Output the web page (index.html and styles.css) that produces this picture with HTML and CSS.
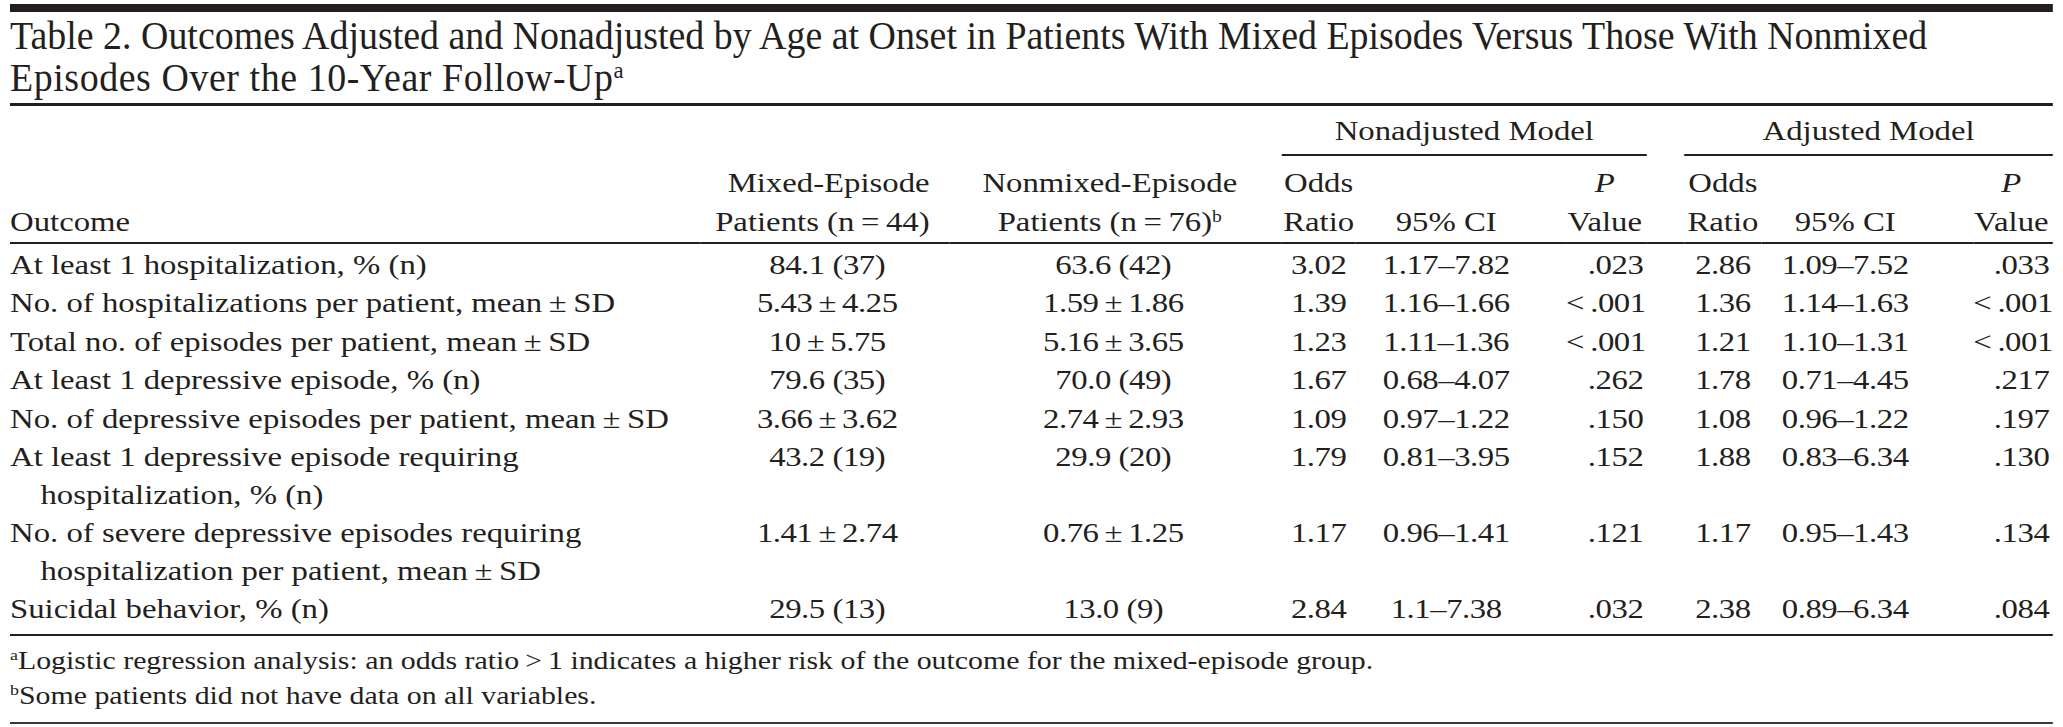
FILE: index.html
```html
<!DOCTYPE html>
<html lang="en">
<head>
<meta charset="utf-8">
<title>Table 2. Outcomes by Age at Onset</title>
<link rel="stylesheet" href="styles.css">
</head>
<body>
<div class="sheet">
  <h1 class="title"><span class="title-text">Table 2. Outcomes Adjusted and Nonadjusted by Age at Onset in Patients With Mixed Episodes Versus Those With Nonmixed<br><span class="title-line2">Episodes Over the 10-Year Follow-Up<sup>a</sup></span></span></h1>
  <table class="outcomes">
    <colgroup>
      <col class="w-out"><col class="w-mix"><col class="w-non">
      <col class="w-or"><col class="w-ci"><col class="w-p">
      <col class="w-sp">
      <col class="w-or2"><col class="w-ci2"><col class="w-p2">
    </colgroup>
    <thead>
      <tr class="h-models">
        <th></th><th></th><th></th>
        <th colspan="3" class="model">Nonadjusted Model</th>
        <th></th>
        <th colspan="3" class="model">Adjusted Model</th>
      </tr>
      <tr class="h-cols">
        <th class="h-out">Outcome</th>
        <th class="h-mix">Mixed-Episode<br>Patients (n&thinsp;=&thinsp;44)</th>
        <th class="h-non">Nonmixed-Episode<br>Patients (n&thinsp;=&thinsp;76)<sup>b</sup></th>
        <th class="h-or">Odds<br>Ratio</th>
        <th class="h-ci">95% CI</th>
        <th class="h-p"><i>P</i><br>Value</th>
        <th></th>
        <th class="h-or">Odds<br>Ratio</th>
        <th class="h-ci2">95% CI</th>
        <th class="h-p"><i>P</i><br>Value</th>
      </tr>
    </thead>
    <tbody>
      <tr>
        <td>At least 1 hospitalization, % (n)</td>
        <td>84.1 (37)</td><td>63.6 (42)</td>
        <td>3.02</td><td>1.17–7.82</td><td>.023</td><td></td>
        <td>2.86</td><td>1.09–7.52</td><td>.033</td>
      </tr>
      <tr>
        <td>No. of hospitalizations per patient, mean&thinsp;±&thinsp;SD</td>
        <td>5.43&thinsp;±&thinsp;4.25</td><td>1.59&thinsp;±&thinsp;1.86</td>
        <td>1.39</td><td>1.16–1.66</td><td>&lt;&thinsp;.001</td><td></td>
        <td>1.36</td><td>1.14–1.63</td><td>&lt;&thinsp;.001</td>
      </tr>
      <tr>
        <td>Total no. of episodes per patient, mean&thinsp;±&thinsp;SD</td>
        <td>10&thinsp;±&thinsp;5.75</td><td>5.16&thinsp;±&thinsp;3.65</td>
        <td>1.23</td><td>1.11–1.36</td><td>&lt;&thinsp;.001</td><td></td>
        <td>1.21</td><td>1.10–1.31</td><td>&lt;&thinsp;.001</td>
      </tr>
      <tr>
        <td>At least 1 depressive episode, % (n)</td>
        <td>79.6 (35)</td><td>70.0 (49)</td>
        <td>1.67</td><td>0.68–4.07</td><td>.262</td><td></td>
        <td>1.78</td><td>0.71–4.45</td><td>.217</td>
      </tr>
      <tr>
        <td>No. of depressive episodes per patient, mean&thinsp;±&thinsp;SD</td>
        <td>3.66&thinsp;±&thinsp;3.62</td><td>2.74&thinsp;±&thinsp;2.93</td>
        <td>1.09</td><td>0.97–1.22</td><td>.150</td><td></td>
        <td>1.08</td><td>0.96–1.22</td><td>.197</td>
      </tr>
      <tr>
        <td>At least 1 depressive episode requiring<br>hospitalization, % (n)</td>
        <td>43.2 (19)</td><td>29.9 (20)</td>
        <td>1.79</td><td>0.81–3.95</td><td>.152</td><td></td>
        <td>1.88</td><td>0.83–6.34</td><td>.130</td>
      </tr>
      <tr>
        <td>No. of severe depressive episodes requiring<br>hospitalization per patient, mean&thinsp;±&thinsp;SD</td>
        <td>1.41&thinsp;±&thinsp;2.74</td><td>0.76&thinsp;±&thinsp;1.25</td>
        <td>1.17</td><td>0.96–1.41</td><td>.121</td><td></td>
        <td>1.17</td><td>0.95–1.43</td><td>.134</td>
      </tr>
      <tr>
        <td>Suicidal behavior, % (n)</td>
        <td>29.5 (13)</td><td>13.0 (9)</td>
        <td>2.84</td><td>1.1–7.38</td><td>.032</td><td></td>
        <td>2.38</td><td>0.89–6.34</td><td>.084</td>
      </tr>
    </tbody>
  </table>
  <div class="notes">
    <p><sup>a</sup>Logistic regression analysis: an odds ratio&thinsp;&gt;&thinsp;1 indicates a higher risk of the outcome for the mixed-episode group.</p>
    <p><sup>b</sup>Some patients did not have data on all variables.</p>
  </div>
</div>
</body>
</html>
```

FILE: styles.css
```css
html, body {
  margin: 0;
  padding: 0;
  background: #ffffff;
}

body {
  font-family: "Liberation Serif", "Times New Roman", serif;
  color: #231f20;
}

/* The printed table is laid out at its natural width and then
   widened horizontally, like the scanned page. */
.sheet {
  width: 1746px;
  margin: 4px 0 0 10px;
  border-top: 8px solid #231f20;
  transform: scaleX(1.17);
  transform-origin: 0 0;
}

.title {
  margin: 0;
  padding: 3.4px 0 3.6px;
  border-bottom: 3px solid #231f20;
  font-family: "Liberation Serif", "Times New Roman", serif;
  font-size: 40px;
  font-weight: normal;
  line-height: 42px;
}

/* condensed display face */
.title-text {
  display: block;
  white-space: nowrap;
  transform: scaleX(0.81);
  transform-origin: 0 0;
}

.title-line2 {
  letter-spacing: 0.6px;
}

sup {
  font-size: 0.6em;
  line-height: 0;
  vertical-align: 0.55em;
}

.outcomes {
  width: 1746px;
  table-layout: fixed;
  border-collapse: separate;
  border-spacing: 0;
  font-size: 28px;
  line-height: 37.5px;
}

.w-out { width: 590px; }
.w-mix { width: 213px; }
.w-non { width: 284px; }
.w-or  { width: 63px; }
.w-ci  { width: 180px; }
.w-p   { width: 69px; }
.w-sp  { width: 32px; }
.w-or2 { width: 66px; }
.w-ci2 { width: 181px; }
.w-p2  { width: 68px; }

.outcomes th,
.outcomes td {
  padding: 0;
  font-weight: normal;
  white-space: nowrap;
}

/* header row 1: model spans */
.h-models th {
  padding: 7.3px 0 3.8px;
  vertical-align: bottom;
  line-height: 36.5px;
}

.h-models .model {
  text-align: center;
  border-bottom: 2px solid #231f20;
}

/* header row 2: column heads */
.h-cols th {
  padding: 7.5px 0 0.9px;
  line-height: 39px;
  vertical-align: bottom;
  border-bottom: 2px solid #231f20;
  text-align: center;
}

.h-cols .h-out { text-align: left; }
.h-cols .h-mix { text-align: right; padding-right: 17px; }
.h-cols .h-non { padding-right: 10px; }
.h-cols .h-ci { padding-right: 25px; }
.h-cols .h-ci2 { padding-right: 38px; }
.h-cols .h-p { padding-right: 3px; }

/* body */
.outcomes td {
  padding: 0.5px 0;
  vertical-align: top;
  text-align: center;
  letter-spacing: -0.4px;
}

.outcomes tbody tr:first-child td { padding-top: 2px; }

.outcomes tbody tr:last-child td { padding-bottom: 6px; }

.outcomes td:nth-child(1) {
  text-align: left;
  padding-left: 26px;
  text-indent: -26px;
  letter-spacing: 0;
}

.outcomes td:nth-child(2) { padding-left: 4px; }
.outcomes td:nth-child(3) { padding-right: 4px; }
.outcomes td:nth-child(5) { padding-right: 25px; }
.outcomes td:nth-child(9) { padding-right: 38px; }
.outcomes td:nth-child(6),
.outcomes td:nth-child(10) {
  text-align: right;
  padding-right: 3px;
}

.notes {
  padding: 7px 0 8px;
  border-top: 2px solid #231f20;
  border-bottom: 2px solid #3a3a3a;
  font-size: 25.5px;
  line-height: 35.5px;
}

.notes p {
  margin: 0;
  white-space: nowrap;
}

.notes sup {
  vertical-align: 0.6em;
}
```
